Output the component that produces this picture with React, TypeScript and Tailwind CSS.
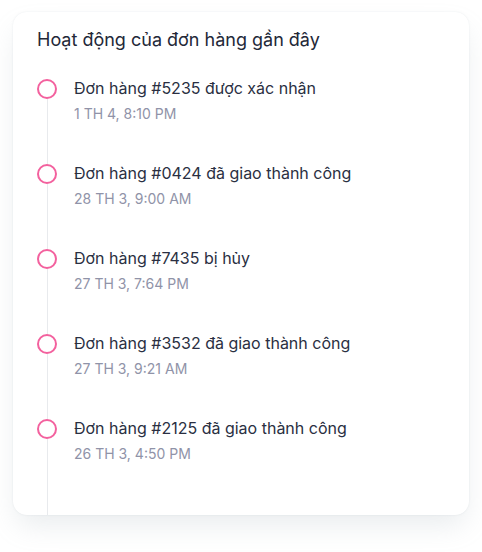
const events = [
  { title: "Đơn hàng #5235 được xác nhận", time: "1 TH 4, 8:10 PM" },
  { title: "Đơn hàng #0424 đã giao thành công", time: "28 TH 3, 9:00 AM" },
  { title: "Đơn hàng #7435 bị hủy", time: "27 TH 3, 7:64 PM" },
  { title: "Đơn hàng #3532 đã giao thành công", time: "27 TH 3, 9:21 AM" },
  { title: "Đơn hàng #2125 đã giao thành công", time: "26 TH 3, 4:50 PM" },
];

export default function App() {
  return (
    <div className="min-h-screen bg-white pt-[12px] px-[13px]" style={{ fontFamily: "Inter, 'Noto Sans', sans-serif" }}>
      <div className="w-[456px] rounded-[14px] bg-white shadow-[0_0_2px_0_rgba(145,158,171,0.2),0_14px_28px_-4px_rgba(145,158,171,0.2)]">
        <div className="px-6 pt-[14px] pb-[25px]">
          <h2 className="text-[18px] leading-[28px] font-normal text-[#232838]">Hoạt động của đơn hàng gần đây</h2>
        </div>
        <div className="px-6">
          {events.map((e, i) => (
            <div key={i} className={`flex ${i === events.length - 1 ? "h-[96px]" : "h-[85px]"}`}>
              <div className="flex w-[20px] flex-col items-center">
                <div className="h-[20px] w-[20px] rounded-full border-[2.5px] border-[#f3619e]" />
                <div className="w-px flex-1 bg-[#e8eaed]" />
              </div>
              <div className="pl-[17px] -mt-[3px]">
                <p className="text-[16px] leading-[24px] text-[#2a2f42]">{e.title}</p>
                <p className="mt-[3px] text-[14px] leading-[22px] text-[#9093a8]">{e.time}</p>
              </div>
            </div>
          ))}
        </div>
      </div>
    </div>
  );
}
